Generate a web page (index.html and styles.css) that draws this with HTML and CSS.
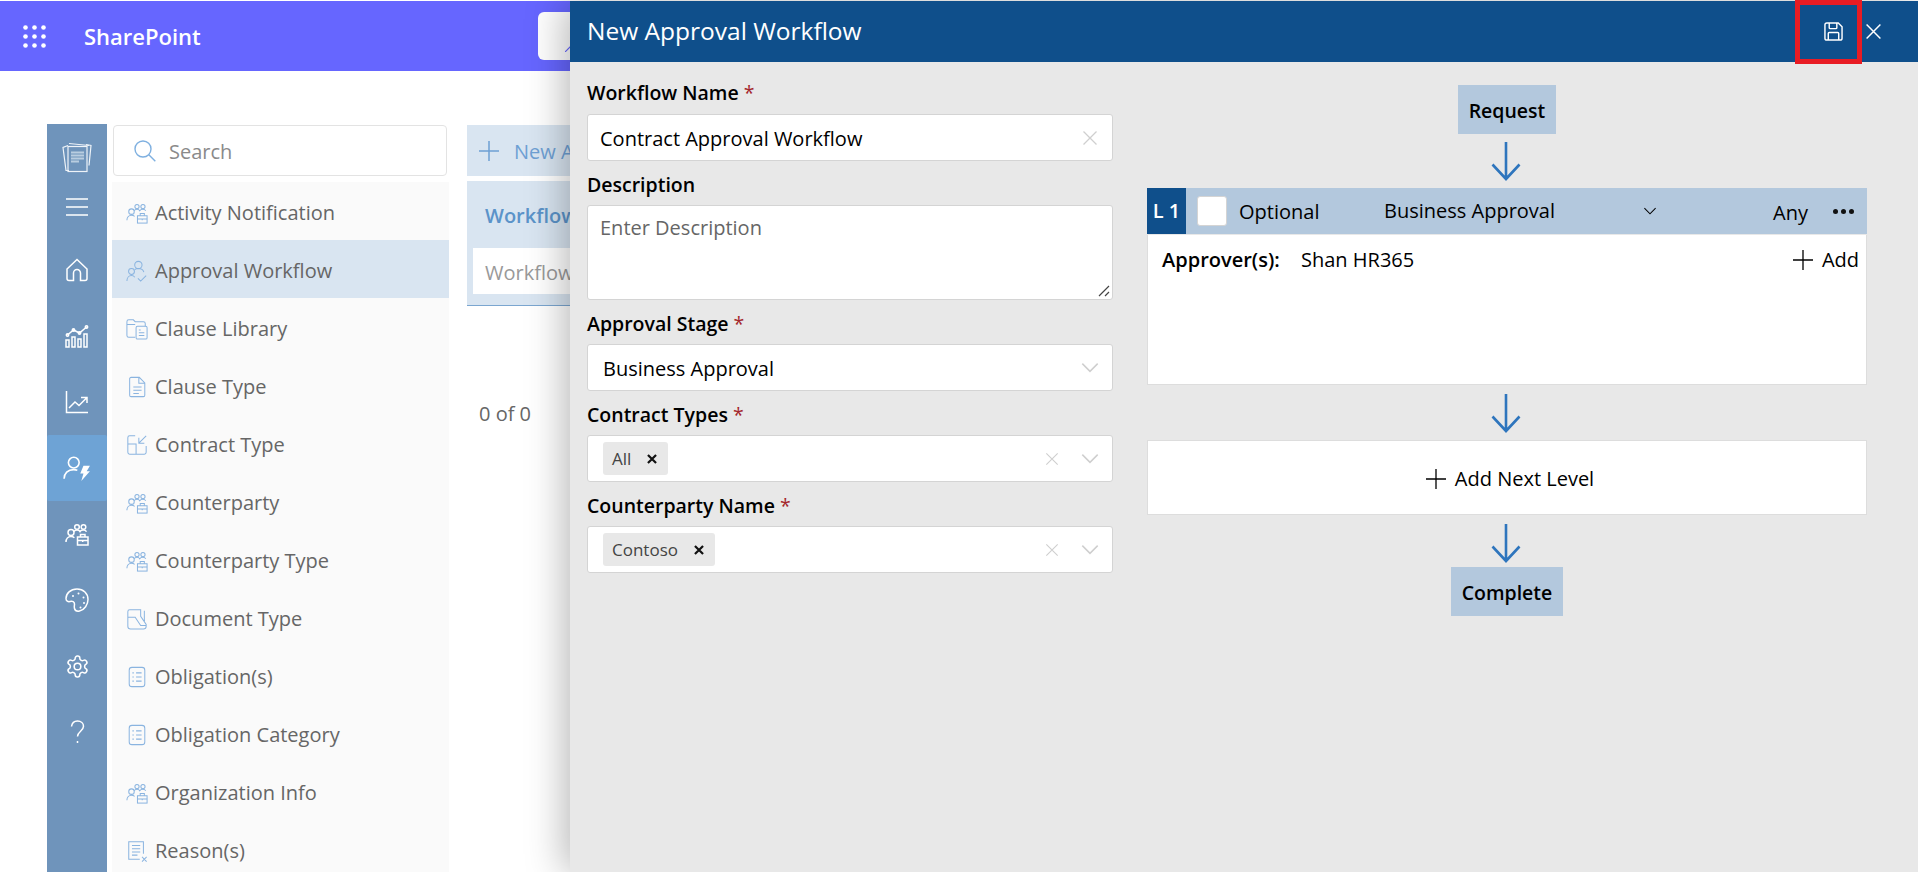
FILE: index.html
```html
<!DOCTYPE html>
<html lang="en">
<head>
  <meta charset="UTF-8" />
  <title>New Approval Workflow</title>
  <link rel="stylesheet" href="styles.css">
</head>
<body>
  <svg class="defs" width="0" height="0">
    <symbol id="i-team" viewBox="0 0 24 24">
      <circle cx="6" cy="10.500" r="3" />
      <path d="M1 20c0-3.300 2.200-5.500 5-5.500 1.300 0 2.500.4 3.400 1.200" />
      <circle cx="12" cy="5" r="2.300" />
      <circle cx="18.500" cy="5" r="2.300" />
      <path d="M9 9.500c.6-1 1.700-1.500 3-1.500s2.400.5 3 1.500c.6-1 1.900-1.500 3.300-1.500 1.500 0 2.700.6 3.200 1.700" />
      <rect x="12.500" y="15" width="10.500" height="8" />
      <path d="M15.500 15v-2.500h4.500V15M12.500 18.500h10.500M17.700 18v2" />
    </symbol>
    <symbol id="i-approve" viewBox="0 0 24 24">
      <circle cx="13.500" cy="5.500" r="4" />
      <circle cx="6" cy="12.500" r="3.200" />
      <path d="M1 23c0-3.500 2.200-6 5-6 1.500 0 2.800.7 3.600 1.800M9.500 10.500c1-.8 2.400-1.200 4-1.200 2.800 0 5.200 1.300 6 4M13 20l3 3 6-6" />
    </symbol>
    <symbol id="i-folder" viewBox="0 0 24 24">
      <path d="M10 21H3a2 2 0 0 1-2-2V4a2 2 0 0 1 2-2h5l2 2h9a2 2 0 0 1 2 2v3M1 7h9" />
      <rect x="11" y="9" width="12" height="14" rx="1.500" />
      <path d="M14 13h2M14 16h6M14 19h6" />
    </symbol>
    <symbol id="i-doc" viewBox="0 0 24 24">
      <path d="M5.500 1.500h9l6 6V21a1.500 1.500 0 0 1-1.500 1.500H5.500A1.500 1.500 0 0 1 4 21V3a1.500 1.500 0 0 1 1.500-1.500zM14 1.500V8h6.500M8 12h9M8 15.500h9M8 19h6" />
    </symbol>
    <symbol id="i-shrink" viewBox="0 0 24 24">
      <path d="M10 2H4a2 2 0 0 0-2 2v16a2 2 0 0 0 2 2h16a2 2 0 0 0 2-2v-7M2 11h9v11M22 2l-8 8M14 4v6h6" />
    </symbol>
    <symbol id="i-file" viewBox="0 0 24 24">
      <path d="M4 2h12v7l6 9v2a3 3 0 0 1-3 3H5a3 3 0 0 1-3-3V4a2 2 0 0 1 2-2zM20 3v12M2 10h8l6 9h6" />
    </symbol>
    <symbol id="i-list" viewBox="0 0 24 24">
      <rect x="3.500" y="1.500" width="17" height="21" rx="3" />
      <path d="M7 7.500h1.500M11 7.500h6M7 12h1.500M11 12h6M7 16.500h1.500M11 16.500h6" />
    </symbol>
    <symbol id="i-reason" viewBox="0 0 24 24">
      <path d="M19 15V2H3v19h12M6.500 6h9M6.500 9.500h9M6.500 13h9M6.500 16.500h6M17.500 18.500l5 5M22.500 18.500l-5 5" />
    </symbol>
    <symbol id="i-x" viewBox="0 0 16 16">
      <path d="M1.500 1.500l13 13M14.500 1.500l-13 13" />
    </symbol>
    <symbol id="i-chev" viewBox="0 0 16 10">
      <path d="M1 1.500l7 7 7-7" />
    </symbol>
    <symbol id="i-plus" viewBox="0 0 20 20">
      <path d="M10 0v20M0 10h20" />
    </symbol>
    <symbol id="i-arrow" viewBox="0 0 30 40">
      <path d="M15 1v37M1.500 23.500L15 38l13.500-14.500" />
    </symbol>
  </svg>

  <header class="topbar">
    <svg class="waffle" viewBox="0 0 23 23">
      <circle cx="2.500" cy="2.500" r="2.300" /><circle cx="11.500" cy="2.500" r="2.300" /><circle cx="20.500" cy="2.500" r="2.300" />
      <circle cx="2.500" cy="11.500" r="2.300" /><circle cx="11.500" cy="11.500" r="2.300" /><circle cx="20.500" cy="11.500" r="2.300" />
      <circle cx="2.500" cy="20.500" r="2.300" /><circle cx="11.500" cy="20.500" r="2.300" /><circle cx="20.500" cy="20.500" r="2.300" />
    </svg>
    <span class="brand">SharePoint</span>
    <div class="site-search">
      <svg class="site-search-icon" viewBox="0 0 8 8"><path d="M0 8l8-8" /></svg>
    </div>
  </header>

  <div class="shell">
    <nav class="rail">
      <div class="rail-logo">
        <svg class="rail-icon logo" viewBox="0 0 30 32">
          <path d="M6 4L1 6l3 23h3M24 3l5 1-2 20" />
          <path d="M7 2l20 2" />
          <rect x="6" y="5" width="19" height="25" />
          <path class="thick" d="M9 11h13M9 14h13M9 17h13M9 20h8" />
        </svg>
      </div>
      <div class="rail-item burger">
        <svg class="rail-icon" viewBox="0 0 22 18"><path d="M0 1h22M0 9h22M0 17h22" /></svg>
      </div>
      <div class="rail-item">
        <svg class="rail-icon" viewBox="0 0 24 24"><path d="M12 1.500L2 11v9.500A2 2 0 0 0 4 22.500h4.500V15a3.500 3.500 0 0 1 7 0v7.500H20a2 2 0 0 0 2-2V11z" /></svg>
      </div>
      <div class="rail-item">
        <svg class="rail-icon" viewBox="0 0 24 24"><path d="M1 16h3v7H1zM7 13h3v10H7zM13 15h3v8h-3zM19 10h3v13h-3zM2.500 11l6-5 6 3 7-6" /><circle cx="2.500" cy="11" r="1.200" /><circle cx="8.500" cy="6" r="1.200" /><circle cx="14.500" cy="9" r="1.200" /><circle cx="21.500" cy="3" r="1.200" /></svg>
      </div>
      <div class="rail-item">
        <svg class="rail-icon" viewBox="0 0 24 24"><path d="M1.500 1v21.500H23M4 18l6-6 4 3.500L21.500 8M16 7.500h6V13" /></svg>
      </div>
      <div class="rail-item active">
        <svg class="rail-icon bolt" viewBox="0 0 26 24"><circle cx="10" cy="7" r="5" /><path d="M1 22c0-5 3.500-8.500 9-8.500 1.200 0 2.300.2 3.300.5" /><path class="solid" d="M19 10h6l-3 5h3l-8 9 2-7h-3z" /></svg>
      </div>
      <div class="rail-item">
        <svg class="rail-icon" viewBox="0 0 24 24"><use href="#i-team" /></svg>
      </div>
      <div class="rail-item">
        <svg class="rail-icon" viewBox="0 0 24 24"><path d="M12 1C5.500 1 1 5.500 1 10.500c0 2.500 2 3.500 4 3 2.500-.6 4.500.2 4.500 2.500 0 1.500-.5 2.500 0 4.500.5 2 2.500 3 5 2.500 5-1 8.500-6.500 8.500-11.500C23 5.500 18.500 1 12 1z" /><circle class="solid" cx="8" cy="8" r="1" /><circle class="solid" cx="13.500" cy="5.500" r="1" /><circle class="solid" cx="18.500" cy="9.500" r="1" /><circle class="solid" cx="19" cy="15" r="1" /><circle class="solid" cx="15.500" cy="19.500" r="1" /></svg>
      </div>
      <div class="rail-item">
        <svg class="rail-icon gear" viewBox="0 0 24 24"><path d="M12.220 2h-.44a2 2 0 0 0-2 2v.18a2 2 0 0 1-1 1.730l-.43.250a2 2 0 0 1-2 0l-.15-.08a2 2 0 0 0-2.730.730l-.22.380a2 2 0 0 0 .73 2.730l.15.100a2 2 0 0 1 1 1.720v.510a2 2 0 0 1-1 1.740l-.15.090a2 2 0 0 0-.73 2.730l.22.380a2 2 0 0 0 2.730.730l.15-.08a2 2 0 0 1 2 0l.43.250a2 2 0 0 1 1 1.730V20a2 2 0 0 0 2 2h.44a2 2 0 0 0 2-2v-.18a2 2 0 0 1 1-1.730l.43-.25a2 2 0 0 1 2 0l.15.080a2 2 0 0 0 2.730-.73l.22-.39a2 2 0 0 0-.73-2.730l-.15-.08a2 2 0 0 1-1-1.740v-.5a2 2 0 0 1 1-1.740l.15-.09a2 2 0 0 0 .73-2.730l-.22-.38a2 2 0 0 0-2.730-.73l-.15.080a2 2 0 0 1-2 0l-.43-.25a2 2 0 0 1-1-1.730V4a2 2 0 0 0-2-2z" /><circle cx="12" cy="12" r="3.200" /></svg>
      </div>
      <div class="rail-item">
        <svg class="rail-icon" viewBox="0 0 24 24"><path d="M6.500 6.500C7 3 9.500 1 12.500 1c3.500 0 6 2.300 6 5.300 0 4.700-6 5.200-6 10.200M12.500 21v2" /></svg>
      </div>
    </nav>

    <aside class="side">
      <div class="side-search">
        <svg class="search-icon" viewBox="0 0 22 22"><circle cx="9" cy="9" r="8" /><path d="M14.800 14.800l6.500 6.500" /></svg>
        <span>Search</span>
      </div>
      <ul class="side-list">
        <li><svg class="side-icon"><use href="#i-team" /></svg>Activity Notification</li>
        <li class="selected"><svg class="side-icon"><use href="#i-approve" /></svg>Approval Workflow</li>
        <li><svg class="side-icon"><use href="#i-folder" /></svg>Clause Library</li>
        <li><svg class="side-icon"><use href="#i-doc" /></svg>Clause Type</li>
        <li><svg class="side-icon"><use href="#i-shrink" /></svg>Contract Type</li>
        <li><svg class="side-icon"><use href="#i-team" /></svg>Counterparty</li>
        <li><svg class="side-icon"><use href="#i-team" /></svg>Counterparty Type</li>
        <li><svg class="side-icon"><use href="#i-file" /></svg>Document Type</li>
        <li><svg class="side-icon"><use href="#i-list" /></svg>Obligation(s)</li>
        <li><svg class="side-icon"><use href="#i-list" /></svg>Obligation Category</li>
        <li><svg class="side-icon"><use href="#i-team" /></svg>Organization Info</li>
        <li><svg class="side-icon"><use href="#i-reason" /></svg>Reason(s)</li>
      </ul>
    </aside>

    <main class="content">
      <div class="new-btn">
        <svg class="new-plus"><use href="#i-plus" /></svg>
        <span>New A</span>
      </div>
      <div class="filter-card">
        <div class="filter-title">Workflow</div>
        <div class="filter-input">Workflow</div>
      </div>
      <div class="pager">0 of 0</div>
    </main>
  </div>

  <section class="panel">
    <div class="panel-head">
      <h1>New Approval Workflow</h1>
      <svg class="head-save" viewBox="0 0 20 20"><path d="M3 1h12l4 4v12a2 2 0 0 1-2 2H3a2 2 0 0 1-2-2V3a2 2 0 0 1 2-2zM5.500 1v5a1 1 0 0 0 1 1h6a1 1 0 0 0 1-1V1M4.500 19v-7a1 1 0 0 1 1-1h9a1 1 0 0 1 1 1v7" /></svg>
      <svg class="head-close"><use href="#i-x" /></svg>
      <div class="callout"></div>
    </div>
    <div class="panel-body">
      <form class="form">
        <label>Workflow Name <em>*</em></label>
        <div class="field">
          <span class="value">Contract Approval Workflow</span>
          <svg class="field-x"><use href="#i-x" /></svg>
        </div>
        <label>Description</label>
        <div class="field area">
          <span class="hint">Enter Description</span>
          <svg class="grip" viewBox="0 0 12 12"><path d="M1 11L11 1M7 11l4-4" /></svg>
        </div>
        <label>Approval Stage <em>*</em></label>
        <div class="field select">
          <span class="value">Business Approval</span>
          <svg class="field-chev"><use href="#i-chev" /></svg>
        </div>
        <label>Contract Types <em>*</em></label>
        <div class="field multi">
          <span class="tag">All <svg class="tag-x"><use href="#i-x" /></svg></span>
          <svg class="multi-x"><use href="#i-x" /></svg>
          <svg class="field-chev"><use href="#i-chev" /></svg>
        </div>
        <label>Counterparty Name <em>*</em></label>
        <div class="field multi">
          <span class="tag">Contoso <svg class="tag-x"><use href="#i-x" /></svg></span>
          <svg class="multi-x"><use href="#i-x" /></svg>
          <svg class="field-chev"><use href="#i-chev" /></svg>
        </div>
      </form>

      <div class="flow">
        <div class="step">Request</div>
        <div class="link"><svg class="arrow"><use href="#i-arrow" /></svg></div>
        <div class="level">
          <div class="level-head">
            <span class="level-no">L 1</span>
            <span class="check"></span>
            <span class="optional">Optional</span>
            <span class="stage">Business Approval <svg class="stage-chev"><use href="#i-chev" /></svg></span>
            <span class="any">Any</span>
            <span class="dots"><i></i><i></i><i></i></span>
          </div>
          <div class="level-body">
            <strong>Approver(s):</strong>
            <span class="person">Shan HR365</span>
            <span class="add"><svg class="plus"><use href="#i-plus" /></svg>Add</span>
          </div>
        </div>
        <div class="link tall"><svg class="arrow"><use href="#i-arrow" /></svg></div>
        <div class="add-level"><svg class="plus"><use href="#i-plus" /></svg>Add Next Level</div>
        <div class="link short"><svg class="arrow"><use href="#i-arrow" /></svg></div>
        <div class="step">Complete</div>
      </div>
    </div>
  </section>
</body>
</html>
```

FILE: styles.css
```css
* {
  box-sizing: border-box;
}
html, body {
  height: 100%;
}
body {
  margin: 0;
  padding-top: 1px;
  background: #fff;
  font-family: 'Open Sans', 'Noto Sans', sans-serif;
  font-size: 20px;
  line-height: 26px;
  color: #000;
  overflow: hidden;
  position: relative;
}
.defs {
  position: absolute;
}
symbol, svg {
  fill: none;
  stroke: currentColor;
}

.topbar {
  height: 70px;
  background: #6666ff;
  display: flex;
  align-items: center;
  padding-left: 23px;
  color: #fff;
}
.waffle {
  width: 23px;
  height: 23px;
  fill: #fff;
  stroke: none;
  flex: none;
}
.brand {
  width: 454px;
  margin-left: 38px;
  font-size: 22px;
  font-weight: 600;
  flex: none;
}
.site-search {
  width: 200px;
  height: 48px;
  padding: 32px 0 0 27px;
  background: #fff;
  border-radius: 6px;
}
.site-search-icon {
  display: block;
  width: 8px;
  height: 8px;
  color: #6666ff;
  stroke-width: 1.2;
}

.shell {
  display: flex;
  height: 748px;
  margin: 53px 0 0 47px;
}

.rail {
  width: 60px;
  background: #6f94bb;
  color: #fff;
  flex: none;
}
.rail-logo {
  height: 50px;
  display: flex;
  align-items: flex-end;
  justify-content: center;
}
.rail-item {
  height: 66px;
  display: flex;
  align-items: center;
  justify-content: center;
}
.rail-item.burger {
  height: 63px;
  padding-top: 2px;
}
.rail-item.burger .rail-icon {
  width: 22px;
  height: 18px;
}
.rail-item.active {
  background: #6ea3d5;
  border-radius: 2px;
}
.rail-icon {
  width: 24px;
  height: 24px;
  stroke-width: 1.5;
}
.rail-icon.logo {
  width: 30px;
  height: 33px;
  stroke-width: 1.2;
  stroke: #eef3f8;
}
.rail-icon.gear {
  width: 25px;
  height: 25px;
}
.rail-icon.bolt {
  width: 28px;
  height: 26px;
}
.rail-icon .thick {
  stroke: #b9cde0;
  stroke-width: 1.8;
}
.rail-icon .solid {
  fill: #fff;
  stroke: none;
}

.side {
  width: 337px;
  margin-left: 5px;
  flex: none;
}
.side-search {
  height: 51px;
  margin: 1px 2px 6px 1px;
  background: #fff;
  border: 1px solid #e3e3e3;
  border-radius: 4px;
  display: flex;
  align-items: center;
  padding-left: 20px;
  color: #8a8a8a;
}
.side-search span {
  padding-top: 2px;
}
.search-icon {
  width: 22px;
  height: 22px;
  color: #7fb0e0;
  stroke-width: 1.4;
  margin-right: 13px;
}
.side-list {
  list-style: none;
  margin: 0;
  padding: 0;
  background: #fafafa;
  height: 692px;
  overflow: hidden;
}
.side-list li {
  height: 58px;
  display: flex;
  align-items: center;
  padding: 3px 0 0 14px;
  color: #666;
}
.side-list li.selected {
  background: #d9e5f1;
}
.side-icon {
  width: 22px;
  height: 22px;
  margin-right: 7px;
  color: #8ab4e0;
  stroke-width: 1.1;
  flex: none;
}

.content {
  margin-left: 18px;
  flex: 1;
  color: #666;
}
.new-btn {
  height: 51px;
  margin-top: 1px;
  background: #d9e5f1;
  display: flex;
  align-items: center;
  padding-left: 12px;
  color: #6ea0d4;
  white-space: nowrap;
}
.new-btn span {
  padding-top: 2px;
}
.new-plus {
  width: 20px;
  height: 20px;
  stroke-width: 1.5;
  margin-right: 15px;
}
.filter-card {
  height: 125px;
  margin-top: 5px;
  padding: 22px 6px 0;
  background: #d9e5f1;
  border-bottom: 1px solid #7ba6d0;
}
.filter-title {
  padding-left: 12px;
  color: #5b93c9;
  font-weight: 600;
  height: 45px;
  white-space: nowrap;
}
.filter-input {
  height: 46px;
  background: #fff;
  padding: 12px 12px 0;
  color: #999;
  white-space: nowrap;
}
.pager {
  margin: 95px 0 0 12px;
}

.panel {
  position: absolute;
  top: 1px;
  left: 570px;
  right: 0;
  bottom: 0;
  background: #e8e8e8;
  box-shadow: -6px 0 36px rgba(0, 0, 0, 0.28);
}
.panel-head {
  height: 61px;
  background: #0f4f8b;
  color: #fff;
  display: flex;
  align-items: center;
  padding-left: 17px;
  position: relative;
}
.panel-head h1 {
  margin: 0 0 2px;
  font-size: 24.500px;
  font-weight: 400;
  flex: 1;
}
.head-save {
  width: 19px;
  height: 19px;
  stroke-width: 1.5;
  margin-right: 22px;
}
.head-close {
  width: 17px;
  height: 17px;
  stroke-width: 1.4;
  margin-right: 36px;
}
.callout {
  position: absolute;
  top: -1px;
  left: 1225px;
  width: 67px;
  height: 64px;
  border: 5px solid #e81c24;
}

.panel-body {
  display: flex;
  padding-left: 17px;
}
.form {
  width: 526px;
  padding-top: 5px;
  flex: none;
}
.form label {
  display: block;
  height: 44px;
  padding-top: 11px;
  font-size: 19.500px;
  font-weight: 600;
  white-space: nowrap;
}
.form label:first-child {
  height: 47px;
  padding-top: 13px;
}
.form em {
  color: #a4262c;
  font-style: normal;
  font-weight: 400;
}
.field {
  height: 47px;
  background: #fff;
  border: 1px solid #d4d4d4;
  border-radius: 3px;
  display: flex;
  align-items: center;
  padding-left: 12px;
  position: relative;
}
.field.select {
  padding-left: 15px;
}
.field .value {
  flex: 1;
  padding-top: 2px;
}
.field.area {
  height: 95px;
  align-items: flex-start;
  padding-top: 9px;
}
.hint {
  color: #666;
}
.grip {
  position: absolute;
  right: 2px;
  bottom: 2px;
  width: 12px;
  height: 12px;
  color: #444;
  stroke-width: 1.2;
}
.field-x {
  width: 16px;
  height: 16px;
  color: #cfcfcf;
  stroke-width: 1.3;
  margin-right: 14px;
}
.field-chev {
  width: 18px;
  height: 11px;
  color: #cfcfcf;
  stroke-width: 1.4;
  margin-right: 13px;
  flex: none;
}
.multi {
  padding-left: 15px;
}
.tag {
  height: 33px;
  padding: 0 11px 0 9px;
  background: #e8e8e8;
  border-radius: 3px;
  display: flex;
  align-items: center;
  font-size: 17px;
  color: #444;
}
.tag-x {
  width: 10px;
  height: 10px;
  margin-left: 16px;
  color: #111;
  stroke-width: 3.500;
}
.multi-x {
  width: 14px;
  height: 14px;
  color: #cfcfcf;
  stroke-width: 1.3;
  margin: 0 22px 0 auto;
}

.flow {
  width: 720px;
  margin-left: 34px;
  padding-top: 23px;
  display: flex;
  flex-direction: column;
  align-items: center;
  flex: none;
}
.step {
  height: 49px;
  padding: 2px 11px 0;
  background: #b3c8dd;
  display: flex;
  align-items: center;
  font-size: 19.500px;
  font-weight: 600;
}
.link {
  height: 54px;
  padding-top: 7px;
  margin-left: -3px;
}
.link.tall {
  height: 55px;
  padding-top: 8px;
}
.link.short {
  height: 52px;
  padding-top: 8px;
}
.arrow {
  display: block;
  width: 30px;
  height: 40px;
  color: #2e75bd;
  stroke-width: 2.600;
}
.level {
  width: 720px;
  height: 197px;
  background: #fff;
  border: 1px solid #ddd;
  border-top: 0;
}
.level-head {
  height: 47px;
  background: #b3c8dd;
  margin: 0 -1px;
  border-bottom: 1px solid #e8e8e8;
  display: flex;
  align-items: center;
}
.level-no {
  width: 39px;
  height: 46px;
  background: #0f4f8b;
  color: #fff;
  font-weight: 600;
  display: flex;
  align-items: center;
  justify-content: center;
}
.check {
  width: 30px;
  height: 30px;
  margin-left: 11px;
  background: #fff;
  border: 1px solid #d4d4d4;
  border-radius: 3px;
}
.optional {
  width: 145px;
  margin-left: 12px;
  padding-top: 2px;
}
.stage {
  width: 389px;
  display: flex;
  align-items: center;
  white-space: nowrap;
}
.stage-chev {
  width: 14px;
  height: 8px;
  stroke-width: 1.300;
  margin-left: auto;
  margin-right: 116px;
}
.any {
  width: 60px;
  padding-top: 4px;
}
.dots {
  display: flex;
  gap: 3px;
}
.dots i {
  width: 5px;
  height: 5px;
  border-radius: 50%;
  background: #111;
}
.level-body {
  display: flex;
  align-items: center;
  padding: 12px 7px 0 14px;
}
.level-body strong {
  font-weight: 600;
  width: 139px;
  white-space: nowrap;
}
.person {
  flex: 1;
}
.plus {
  width: 20px;
  height: 20px;
  stroke-width: 1.300;
  margin-right: 9px;
  flex: none;
}
.add {
  display: flex;
  align-items: center;
}
.add-level {
  width: 720px;
  height: 75px;
  padding: 3px 0 0 6px;
  background: #fff;
  border: 1px solid #ddd;
  display: flex;
  align-items: center;
  justify-content: center;
}
```
